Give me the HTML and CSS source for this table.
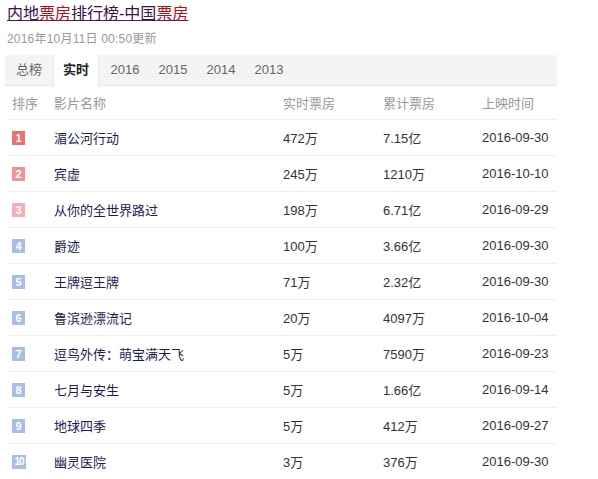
FILE: index.html
```html
<!DOCTYPE html>
<html lang="zh">
<head>
<meta charset="utf-8">
<link rel="stylesheet" href="styles.css">
</head>
<body>
<div class="wrap">
  <h1 class="title"><a href="#"><span class="p">内地</span><span class="r">票房</span><span class="p">排行榜-中国</span><span class="r">票房</span></a></h1>
  <div class="date">2016年10月11日 00:50更新</div>
  <div class="tabs">
    <span class="tab">总榜</span>
    <span class="tab active">实时</span>
    <span class="tab">2016</span>
    <span class="tab">2015</span>
    <span class="tab">2014</span>
    <span class="tab">2013</span>
  </div>
  <div class="table">
    <div class="row head">
      <span>排序</span><span>影片名称</span><span>实时票房</span><span>累计票房</span><span>上映时间</span>
    </div>
    <div class="row"><span><i class="b b1">1</i></span><span class="name">湄公河行动</span><span>472万</span><span>7.15亿</span><span>2016-09-30</span></div>
    <div class="row"><span><i class="b b2">2</i></span><span class="name">宾虚</span><span>245万</span><span>1210万</span><span>2016-10-10</span></div>
    <div class="row"><span><i class="b b3">3</i></span><span class="name">从你的全世界路过</span><span>198万</span><span>6.71亿</span><span>2016-09-29</span></div>
    <div class="row"><span><i class="b">4</i></span><span class="name">爵迹</span><span>100万</span><span>3.66亿</span><span>2016-09-30</span></div>
    <div class="row"><span><i class="b">5</i></span><span class="name">王牌逗王牌</span><span>71万</span><span>2.32亿</span><span>2016-09-30</span></div>
    <div class="row"><span><i class="b">6</i></span><span class="name">鲁滨逊漂流记</span><span>20万</span><span>4097万</span><span>2016-10-04</span></div>
    <div class="row"><span><i class="b">7</i></span><span class="name">逗鸟外传：萌宝满天飞</span><span>5万</span><span>7590万</span><span>2016-09-23</span></div>
    <div class="row"><span><i class="b">8</i></span><span class="name">七月与安生</span><span>5万</span><span>1.66亿</span><span>2016-09-14</span></div>
    <div class="row"><span><i class="b">9</i></span><span class="name">地球四季</span><span>5万</span><span>412万</span><span>2016-09-27</span></div>
    <div class="row"><span><i class="b b10">10</i></span><span class="name">幽灵医院</span><span>3万</span><span>376万</span><span>2016-09-30</span></div>
  </div>
</div>
</body>
</html>
```

FILE: styles.css
```css
* { box-sizing: border-box; }
body {
  margin: 0;
  background: #fff;
  font-family: "Liberation Sans", Arial, "Noto Sans CJK SC", sans-serif;
  color: #333;
}
.wrap {
  width: 557px;
  padding: 0 0 0 5px;
}
.title {
  margin: 0;
  padding: 4px 0 0 2px;
  font-size: 16px;
  font-weight: normal;
  line-height: 20px;
  height: 28px;
}
.title a {
  color: #4a1150;
  text-decoration: underline;
  text-decoration-color: #5a1a60;
}
.title .p { color: #3e0e4a; }
.title .r { color: #b0101a; }
.date {
  padding-left: 2px;
  font-size: 12px;
  line-height: 16px;
  color: #999;
  height: 27px;
  padding-top: 3px;
  letter-spacing: 0.2px;
}
.tabs {
  display: flex;
  height: 31px;
  background: #f4f4f4;
  border-bottom: 1px solid #e6e6e6;
}
.tab {
  width: 48px;
  text-align: center;
  font-size: 13px;
  line-height: 30px;
  color: #666;
}
.tab.active {
  background: #fff;
  color: #222;
  font-weight: bold;
  border-left: 1px solid #e6e6e6;
  border-right: 1px solid #e6e6e6;
  height: 31px;
  margin-bottom: -1px;
  width: 46px;
  margin-right: 2px;
}
.table {
  margin-left: 3px;
}
.row {
  display: grid;
  grid-template-columns: 42px 229px 100px 99px 1fr;
  height: 36px;
  align-items: center;
  border-bottom: 1px solid #efefef;
  font-size: 13px;
  color: #333;
  padding-left: 4px;
}
.row.head {
  height: 34px;
  color: #999;
}
.name { color: #1c1c55; }
.b {
  display: inline-block;
  width: 13px;
  height: 14px;
  line-height: 14px;
  text-align: center;
  font-style: normal;
  font-size: 11px;
  font-weight: bold;
  color: #fff;
  background: #a9bee4;
  vertical-align: middle;
}
.b1 { background: #ea7273; }
.b2 { background: #ef9495; }
.b3 { background: #f4b0b2; }
.b10 { width: 14px; font-size: 10px; letter-spacing: -1px; }
```
